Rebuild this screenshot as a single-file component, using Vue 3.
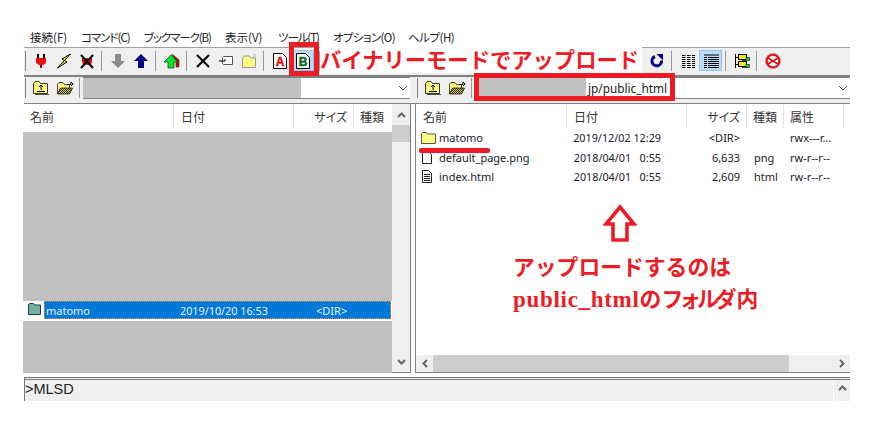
<template>
  <div class="page">
    <svg class="defs" width="0" height="0">
      <defs>
        <pattern id="dither" width="2" height="2" patternUnits="userSpaceOnUse">
          <rect width="2" height="2" fill="#ffff40"/>
          <rect width="1" height="1" fill="#fffbc0"/>
          <rect x="1" y="1" width="1" height="1" fill="#fffbc0"/>
        </pattern>
        <pattern id="dither-dark" width="2" height="2" patternUnits="userSpaceOnUse">
          <rect width="2" height="2" fill="#e8d820"/>
          <rect width="1" height="1" fill="#222"/>
          <rect x="1" y="1" width="1" height="1" fill="#222"/>
        </pattern>
      </defs>
    </svg>

    <div class="app">
      <div class="menubar">
        <span v-for="m in menus" :key="m.label" class="menu" :style="{ width: m.w + 'px', letterSpacing: m.ls + 'px' }">{{ m.label }}</span>
      </div>

      <div class="toolbar">
        <i class="grip"></i>
        <span class="tb"><svg width="16" height="16" viewBox="0 0 16 16"><path d="M5 1v4M11 1v4" stroke="#000" stroke-width="2"/><path d="M3 5h10v4q0 2-3 3H6q-3-1-3-3z" fill="#e81010"/><path d="M7 12h2v3H7z" fill="#900"/></svg></span>
        <span class="tb"><svg width="16" height="16" viewBox="0 0 16 16"><path d="M14.500 1 6 6l2.500 1.500L1.500 15 11 9 8.500 7.500z" fill="#f8f020" stroke="#000"/></svg></span>
        <span class="tb"><svg width="16" height="16" viewBox="0 0 16 16"><path d="M3 5h10v4q0 2-3 3H6q-3-1-3-3z" fill="#e81010"/><path d="m2 2 12 13M14 2 2 15" stroke="#000" stroke-width="2"/></svg></span>
        <i class="sep"></i>
        <span class="tb"><svg width="16" height="16" viewBox="0 0 16 16"><path d="M5 1h6v7h4l-7 7-7-7h4z" fill="#8c8c8c"/></svg></span>
        <span class="tb"><svg width="16" height="16" viewBox="0 0 16 16"><path d="M8 1l7 7h-4v7H5V8H1z" fill="#000080"/></svg></span>
        <i class="sep"></i>
        <span class="tb"><svg width="16" height="16" viewBox="0 0 16 16"><path d="M8 1l7 6v7h-3V8z" fill="#c01010" stroke="#600" stroke-width=".6"/><path d="M7 2l7 7h-4v6H4V9H0z" fill="#10e030" stroke="#050" stroke-width=".8"/></svg></span>
        <i class="sep"></i>
        <span class="tb"><svg width="16" height="16" viewBox="0 0 16 16"><path d="m2 2 12 12M14 2 2 14" stroke="#000" stroke-width="2"/></svg></span>
        <span class="tb"><svg width="16" height="16" viewBox="0 0 16 16"><path d="M5.500 3.500h9v8h-9l-1-1v-6z" fill="#fff" stroke="#555"/><path d="M1 8h6V6" fill="none" stroke="#000"/></svg></span>
        <span class="tb"><svg width="16" height="16" viewBox="0 0 16 16"><path d="M1.500 14.500V5l2-2h5l1 2h5v9.500z" fill="url(#dither)" stroke="#999"/><path d="M12 1l3 3M15 1l-3 3" stroke="#bbb"/></svg></span>
        <i class="sep"></i>
        <span class="tb"><svg width="16" height="16" viewBox="0 0 16 16"><path d="M1.500.500h9l4 4v11h-13z" fill="#fff" stroke="#000"/><text x="8" y="13" class="ico-letter a">A</text></svg></span>
        <span class="tb on"><svg width="16" height="16" viewBox="0 0 16 16"><path d="M1.500.500h9l4 4v11h-13z" fill="#fff" stroke="#000"/><text x="8" y="13" class="ico-letter b">B</text></svg></span>
        <i class="sep after-b"></i>
        <span class="spacer"></span>
        <span class="tb"><svg width="16" height="16" viewBox="0 0 16 16"><path d="M12.500 7.500a4.800 4.800 0 1 1-6.500-4" fill="none" stroke="#000080" stroke-width="3"/><path d="M7.500 1H14v6.500z" fill="#000080"/></svg></span>
        <i class="sep"></i>
        <span class="tb"><svg width="16" height="16" viewBox="0 0 16 16"><path d="M2 2.500h13M2 4.500h13M2 6.500h13M2 8.500h13M2 10.500h13M2 12.500h13M2 14.500h13" stroke="#000" stroke-dasharray="3.500 1.500"/></svg></span>
        <span class="tb on"><svg width="16" height="16" viewBox="0 0 16 16"><path d="M1 2h15M1 4.500h15M1 6.500h15M1 8.500h15M1 10.500h15M1 12.500h15M1 14.500h15" stroke="#000"/><path d="M4.500 3v12" stroke="#b9d9f5"/></svg></span>
        <i class="sep"></i>
        <span class="tb"><svg width="16" height="16" viewBox="0 0 16 16"><path d="M1.500 1v14M1.500 4.500h3M1.500 11.500h3" stroke="#000"/><rect x="4.500" y="1.500" width="8" height="5" fill="#f2f010" stroke="#000"/><path d="M12 4.500h3.500v3H8V7h4z" fill="#20e020" stroke="#000" stroke-width=".6"/><rect x="4.500" y="8.500" width="8" height="5" fill="#f2f010" stroke="#000"/><path d="M12 11.500h3.500v3H8V14h4z" fill="#20e020" stroke="#000" stroke-width=".6"/></svg></span>
        <i class="sep"></i>
        <span class="tb"><svg width="16" height="16" viewBox="0 0 16 16"><circle cx="8" cy="8" r="6.500" fill="#fff" stroke="#e01010" stroke-width="2.500"/><circle cx="8" cy="8" r="7.600" fill="none" stroke="#b0b0b0" stroke-width=".8"/><path d="m3 5 10 6M13 5 3 11" stroke="#e01010" stroke-width="1.600"/></svg></span>
      </div>

      <div class="panes-head">
        <div class="addr left-addr">
          <i class="grip"></i>
          <span class="tb small"><svg width="16" height="14" viewBox="0 0 16 14"><path d="M.5 12.500V2.500l1.500-2h4l1.500 2h7v10z" fill="url(#dither)" stroke="#333"/><path d="M8 4v5M6 6l2-2 2 2M4 10.500h8" stroke="#000" fill="none"/><path d="M2 13.500h14" stroke="#555"/></svg></span>
          <span class="tb small"><svg width="16" height="14" viewBox="0 0 16 14"><path d="M.5 12.500V3.500l1.500-2h4l1.500 2h5v9z" fill="url(#dither)" stroke="#444"/><path d="M.5 13l3-6h12l-3 6z" fill="url(#dither-dark)" stroke="#000" stroke-width=".7"/><path d="M10 3.500h4V1l2 2-2 2" stroke="#000" fill="none"/></svg></span>
          <i class="sep"></i>
          <div class="combo left-combo">
            <span class="masked left-mask"></span>
            <svg class="chev" width="10" height="6" viewBox="0 0 10 6"><path d="m1 1 4 4 4-4" fill="none" stroke="#555"/></svg>
          </div>
        </div>
        <div class="addr right-addr">
          <i class="grip"></i>
          <span class="tb small"><svg width="16" height="14" viewBox="0 0 16 14"><path d="M.5 12.500V2.500l1.500-2h4l1.500 2h7v10z" fill="url(#dither)" stroke="#333"/><path d="M8 4v5M6 6l2-2 2 2M4 10.500h8" stroke="#000" fill="none"/><path d="M2 13.500h14" stroke="#555"/></svg></span>
          <span class="tb small"><svg width="16" height="14" viewBox="0 0 16 14"><path d="M.5 12.500V3.500l1.500-2h4l1.500 2h5v9z" fill="url(#dither)" stroke="#444"/><path d="M.5 13l3-6h12l-3 6z" fill="url(#dither-dark)" stroke="#000" stroke-width=".7"/><path d="M10 3.500h4V1l2 2-2 2" stroke="#000" fill="none"/></svg></span>
          <i class="sep"></i>
          <div class="combo">
            <span class="masked right-mask"></span><span class="path-end">jp/public_html</span>
            <svg class="chev" width="10" height="6" viewBox="0 0 10 6"><path d="m1 1 4 4 4-4" fill="none" stroke="#555"/></svg>
          </div>
        </div>
      </div>

      <div class="panes">
        <section class="pane left">
          <div class="list">
            <div class="cols">
              <span class="c name">名前</span><span class="c date">日付</span><span class="c size">サイズ</span><span class="c kind">種類</span>
            </div>
            <div class="left-body">
              <div class="masked-area">
                <div class="sel-row">
                  <span class="sel-icon"><svg width="14" height="12" viewBox="0 0 14 12"><path d="M.5 11.500V1.500l1-1h4l1 1.500h6v9.500z" fill="#78b09c" stroke="#0a3a70"/></svg></span>
                  <div class="sel">
                    <span class="s-name">matomo</span><span class="s-date">2019/10/20 16:53</span><span class="s-size">&lt;DIR&gt;</span>
                  </div>
                </div>
              </div>
            </div>
          </div>
          <div class="vbar">
            <span class="arrow"><svg width="9" height="6" viewBox="0 0 9 6"><path d="m1 5 3.500-3.500L8 5" fill="none" stroke="#666" stroke-width="2"/></svg></span>
            <span class="thumb"></span>
            <span class="track"></span>
            <span class="arrow"><svg width="9" height="6" viewBox="0 0 9 6"><path d="m1 1 3.500 3.500L8 1" fill="none" stroke="#666" stroke-width="2"/></svg></span>
          </div>
        </section>
        <section class="pane right">
          <div class="list">
            <div class="cols">
              <span class="c rname">名前</span><span class="c rdate">日付</span><span class="c rsize">サイズ</span><span class="c rkind">種類</span><span class="c rattr">属性</span>
            </div>
            <div class="rows">
              <div v-for="f in files" :key="f.name" class="row">
                <span class="f-icon">
                  <svg v-if="f.type === 'dir'" width="15" height="12" viewBox="0 0 15 12"><path d="M.5 11.500V1.500l1-1h4l1 1.500h8v9.500z" fill="url(#dither)" stroke="#555"/></svg>
                  <svg v-else width="12" height="13" viewBox="0 0 12 13"><path d="M1.500.500h6l3 3v9h-9z" fill="#fff" stroke="#222"/><path v-if="f.type === 'doc'" d="M3 4.500h6M3 6.500h6M3 8.500h6M3 10.500h6" stroke="#222"/></svg>
                </span>
                <span class="f-name">{{ f.name }}</span>
                <span class="f-date">{{ f.date }}</span>
                <span class="f-size">{{ f.size }}</span>
                <span class="f-kind">{{ f.kind }}</span>
                <span class="f-attr">{{ f.attr }}</span>
              </div>
            </div>
          </div>
          <div class="hbar">
            <span class="arrow"><svg width="6" height="9" viewBox="0 0 6 9"><path d="M5 1 1.500 4.500 5 8" fill="none" stroke="#666" stroke-width="2"/></svg></span>
            <span class="hthumb"></span>
            <span class="htrack"></span>
            <span class="arrow"><svg width="6" height="9" viewBox="0 0 6 9"><path d="m1 1 3.500 3.500L1 8" fill="none" stroke="#666" stroke-width="2"/></svg></span>
          </div>
        </section>
      </div>

      <div class="log">
        <span class="log-text">&gt;MLSD</span>
        <span class="log-bar"><svg width="9" height="6" viewBox="0 0 9 6"><path d="m1 5 3.500-3.500L8 5" fill="none" stroke="#666" stroke-width="2"/></svg></span>
      </div>
    </div>

    <!-- 説明の書き込み -->
    <div class="note note-top">バイナリーモードでアップロード</div>
    <div class="mark mark-b"></div>
    <div class="mark mark-path"></div>
    <div class="mark-line"></div>
    <svg class="up-arrow" width="34" height="39" viewBox="0 0 34 39"><path d="M17 3 31 20H24V36H10V20H3Z" fill="#fff" stroke="#ed1c24" stroke-width="3.600"/></svg>
    <div class="note note-body">アップロードするのは<br><span class="latin">public_html</span>の<span class="kana">フォル</span>ダ内</div>
  </div>
</template>

<script setup>
const menus = [
  { label: '接続(F)', w: 51, ls: 0 },
  { label: 'コマンド(C)', w: 63, ls: -1 },
  { label: 'ブックマーク(B)', w: 81, ls: -1.1 },
  { label: '表示(V)', w: 53, ls: 0 },
  { label: 'ツール(T)', w: 55, ls: -1.1 },
  { label: 'オプション(O)', w: 75, ls: -0.6 },
  { label: 'ヘルプ(H)', w: 60, ls: -0.5 }
]

const files = [
  { name: 'matomo', type: 'dir', date: '2019/12/02 12:29', size: '<DIR>', kind: '', attr: 'rwx---r...' },
  { name: 'default_page.png', type: 'file', date: '2018/04/01   0:55', size: '6,633', kind: 'png', attr: 'rw-r--r--' },
  { name: 'index.html', type: 'doc', date: '2018/04/01   0:55', size: '2,609', kind: 'html', attr: 'rw-r--r--' }
]
</script>

<style>
html, body {
  margin: 0;
  background: #fff;
}
</style>

<style scoped>
.page {
  position: relative;
  width: 884px;
  height: 438px;
  overflow: hidden;
  background: #fff;
  font-family: "Noto Sans CJK JP", "Noto Sans", sans-serif;
  font-size: 12px;
  font-feature-settings: "palt";
  color: #222;
}

.defs {
  position: absolute;
}

.app {
  width: 826px;
  margin-left: 24px;
  padding-top: 26px;
}

.menubar {
  display: flex;
  height: 21px;
  align-items: center;
  padding-left: 6px;
  font-size: 11.500px;
}

.menu {
  flex: none;
  white-space: nowrap;
}

.toolbar {
  display: flex;
  align-items: center;
  height: 30px;
  padding: 0 0 2px 1px;
  background: #efefef;
  border-top: 1px solid #a0a0a0;
  border-bottom: 2px solid #808080;
  box-sizing: border-box;
}

.grip {
  width: 1px;
  height: 20px;
  background: #808080;
  flex: none;
  margin-right: 3px;
}

.sep {
  width: 1px;
  height: 20px;
  background: #999;
  flex: none;
  margin: 0 4px 0 3px;
}

.sep.after-b {
  margin-left: 5px;
}

.tb {
  width: 23px;
  height: 21px;
  display: flex;
  align-items: center;
  justify-content: center;
  flex: none;
  box-sizing: border-box;
}

.tb.on {
  background: #bcdcf5;
  border: 1px solid #90c6f2;
}

.tb.small {
  width: 24px;
  height: 22px;
}

.spacer {
  flex: 0 0 321px;
}

.ico-letter {
  font: bold 12px "Liberation Sans", sans-serif;
  text-anchor: middle;
  stroke-width: .5px;
}

.ico-letter.a {
  fill: #e01010;
  stroke: #e01010;
}

.ico-letter.b {
  fill: #087020;
  stroke: #087020;
}

.panes-head {
  display: flex;
}

.addr {
  display: flex;
  align-items: flex-start;
  box-sizing: border-box;
  background: #efefef;
  border-bottom: 1px solid #808080;
  height: 27px;
}

.addr .grip {
  margin-top: 1px;
}

.addr .sep {
  margin: 1px 2px 0;
}

.left-addr {
  width: 391px;
  padding-left: 1px;
}

.right-addr {
  width: 435px;
  padding-left: 2px;
}

.combo {
  flex: 1;
  height: 22px;
  box-sizing: border-box;
  position: relative;
  display: flex;
  align-items: center;
  background: #fff;
  border-top: 1px solid #808080;
  border-bottom: 1px solid #808080;
  font-size: 12px;
}

.left-combo {
  margin: 0 5px 0 1px;
}

.masked {
  display: block;
  height: 20px;
  background: #c0c0c0;
  flex: none;
}

.left-mask {
  width: 218px;
}

.right-mask {
  width: 112px;
}

.path-end {
  font-family: "Noto Sans", sans-serif;
  font-size: 11.800px;
  padding-left: 2px;
}

.chev {
  position: absolute;
  right: 2px;
  top: 7px;
}

.panes {
  display: flex;
  height: 269px;
  margin-left: -1px;
}

.pane {
  box-sizing: border-box;
  height: 269px;
  background: #fff;
}

.pane.left {
  width: 392px;
  display: flex;
}

.pane.right {
  width: 435px;
  margin-left: 0;
  border-left: 1px solid #808080;
  display: flex;
  flex-direction: column;
}

.pane.left .list {
  flex: 1;
  display: flex;
  flex-direction: column;
}

.pane.right .list {
  flex: 1;
}

.cols {
  display: flex;
  height: 24px;
  flex: none;
  color: #333;
}

.c {
  display: flex;
  height: 100%;
  align-items: center;
  box-sizing: border-box;
  border-right: 1px solid #e4e4e4;
  flex: none;
}

.name { width: 151px; padding-left: 7px; }
.date { width: 120px; padding-left: 7px; }
.size { width: 60px; justify-content: flex-end; padding-right: 6px; }
.kind { width: 38px; padding-left: 6px; border-right: 0; }

.rname { width: 151px; padding-left: 7px; }
.rdate { width: 120px; padding-left: 7px; }
.rsize { width: 60px; justify-content: flex-end; padding-right: 6px; }
.rkind { width: 37px; padding-left: 6px; }
.rattr { width: 60px; padding-left: 6px; }

.left-body {
  flex: 1;
  padding-top: 4px;
  display: flex;
  flex-direction: column;
}

.masked-area {
  flex: 1;
  background: #c0c0c0;
  padding-top: 169px;
}

.sel-row {
  display: flex;
  height: 20px;
  background: #fff;
}

.sel-icon {
  width: 21px;
  display: flex;
  padding: 2px 0 0 5px;
  box-sizing: border-box;
  flex: none;
}

.sel {
  width: 347px;
  height: 18px;
  flex: none;
  display: flex;
  align-items: center;
  background: #0078d7;
  color: #e8f2ff;
  outline: 1px dotted #f09030;
  outline-offset: -1px;
  font-family: "Noto Sans", sans-serif;
  font-size: 11px;
}

.s-name { width: 136px; padding-left: 2px; box-sizing: border-box; }
.s-date { width: 136px; font-size: 10.800px; }
.s-size { width: 50px; }

.vbar {
  width: 19px;
  height: 269px;
  display: flex;
  flex-direction: column;
  background: #efefef;
  flex: none;
  box-sizing: border-box;
  border-right: 1px solid #808080;
  border-bottom: 1px solid #808080;
  margin-right: 4px;
}

.arrow {
  height: 21px;
  display: flex;
  align-items: center;
  justify-content: center;
  flex: none;
}

.thumb {
  height: 17px;
  background: #cdcdcd;
  flex: none;
}

.track {
  flex: 1;
}

.rows {
  font-family: "Noto Sans", sans-serif;
  font-size: 11px;
}

.row {
  display: flex;
  height: 19.500px;
  align-items: center;
  color: #1a1a2a;
}

.f-icon {
  width: 23px;
  padding-left: 5px;
  box-sizing: border-box;
  display: flex;
  flex: none;
}

.f-name { width: 134px; flex: none; }
.f-date { width: 88px; flex: none; text-align: right; font-size: 10.800px; white-space: pre; }
.f-size { width: 79px; flex: none; text-align: right; }
.f-kind { width: 36px; flex: none; padding-left: 14px; }
.f-attr { flex: none; }

.hbar {
  height: 18px;
  display: flex;
  flex: none;
  box-sizing: border-box;
  background: #efefef;
  border-bottom: 1px solid #808080;
}

.hbar .arrow {
  width: 17px;
  height: 17px;
}

.hthumb {
  width: 356px;
  height: 17px;
  background: #cdcdcd;
}

.htrack {
  flex: 1;
}

.log {
  margin-top: 4px;
  height: 24px;
  box-sizing: border-box;
  border-top: 3px double #777;
  border-left: 1px solid #777;
  background: #efefef;
  display: flex;
  align-items: center;
  justify-content: space-between;
}

.log-text {
  font-family: "Liberation Sans", sans-serif;
  font-size: 14.500px;
  line-height: 19px;
  margin-top: -2px;
  font-feature-settings: normal;
  color: #222;
}

.log-bar {
  width: 17px;
  height: 100%;
  display: flex;
  align-items: flex-start;
  justify-content: center;
  padding-top: 5px;
  box-sizing: border-box;
  border-left: 1px solid #fff;
}

/* 赤い書き込みは画像の上に重ねる */
.mark {
  position: absolute;
  border: 5px solid #ed1c24;
  box-sizing: border-box;
}

.mark-b {
  left: 289px;
  top: 42px;
  width: 30px;
  height: 34px;
}

.mark-path {
  left: 474px;
  top: 73px;
  width: 201px;
  height: 28px;
}

.mark-line {
  position: absolute;
  left: 419px;
  top: 148px;
  width: 71px;
  height: 5px;
  border-radius: 2px;
  background: #ed1c24;
}

.note {
  position: absolute;
  color: #ed1c24;
  font-family: "Noto Sans CJK JP", serif;
  font-weight: 700;
  font-feature-settings: normal;
  white-space: nowrap;
}

.note-top {
  left: 320px;
  top: 47px;
  font-size: 21.300px;
  line-height: 24px;
  background: #fff;
  width: 322px;
  height: 26px;
}

.note-body {
  left: 513px;
  top: 250px;
  font-size: 21.800px;
  line-height: 32px;
}

.latin {
  font-family: "Liberation Serif", serif;
  font-size: 23px;
  letter-spacing: .7px;
}

.kana {
  letter-spacing: -4px;
}

.up-arrow {
  position: absolute;
  left: 603px;
  top: 204px;
}
</style>
